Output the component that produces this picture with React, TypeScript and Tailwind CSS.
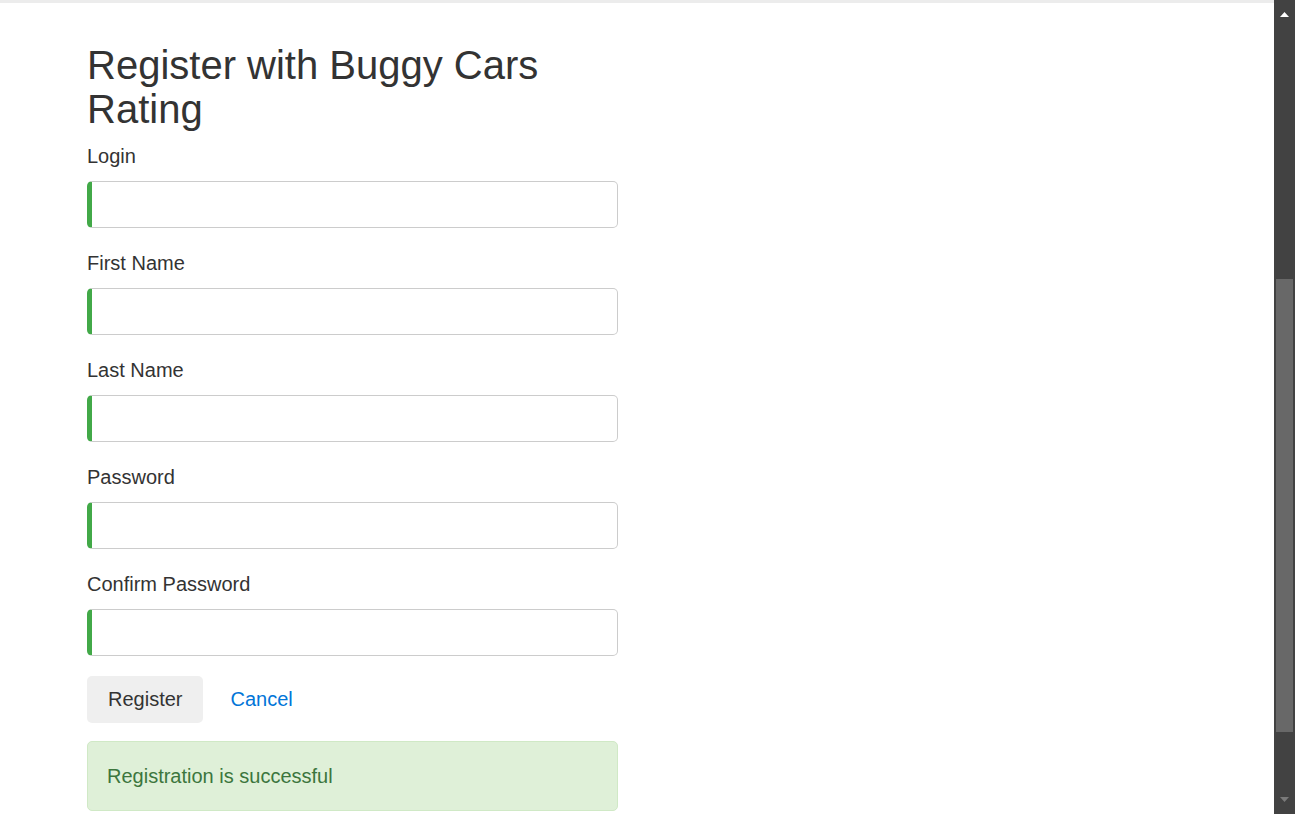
import React from "react";

const fields = ["Login", "First Name", "Last Name", "Password", "Confirm Password"];

export default function App() {
  return (
    <div
      className="flex h-[814px] w-[1295px] overflow-hidden bg-white text-[#292b2c]"
      style={{ fontFamily: '"Liberation Sans", Arial, sans-serif' }}
    >
      <div className="flex min-w-0 flex-1 flex-col">
        <div className="h-[3px] w-full bg-[#ececec]" />
        <div className="w-[618px] pl-[87px]">
          <h1 className="mt-[40px] mb-[10px] text-[40px] font-normal leading-[44px] text-[#333]">
            Register with Buggy Cars Rating
          </h1>
          <form onSubmit={(e) => e.preventDefault()}>
            {fields.map((f) => (
              <div key={f} className="mb-[20px]">
                <label className="mb-[10px] block text-[20px] leading-[30px] text-[#333]">{f}</label>
                <input
                  type={f.includes("Password") ? "password" : "text"}
                  className="block h-[47px] w-full rounded-[5px] border border-l-[5px] border-[#cccccc] border-l-[#42A948] bg-white px-[16px] text-[20px] outline-none"
                />
              </div>
            ))}
            <div className="flex items-center">
              <button
                type="submit"
                className="h-[47px] rounded-[5px] bg-[#efefef] px-[21px] text-[20px] leading-[25px] text-[#333]"
              >
                Register
              </button>
              <a className="ml-[6px] cursor-pointer px-[21px] text-[20px] leading-[25px] text-[#0275d8]">Cancel</a>
            </div>
            <div className="mt-[18px] h-[70px] rounded-[5px] border border-[#d0e9c6] bg-[#dff0d8] px-[19px] py-[20px] text-[20px] leading-[28px] text-[#3c763d]">
              Registration is successful
            </div>
          </form>
        </div>
      </div>
      <div className="flex h-[814px] w-[21px] flex-col bg-[#424242]">
        <div className="flex h-[17px] items-end justify-center">
          <svg width="9" height="5" viewBox="0 0 9 5">
            <polygon points="0,5 4.5,0 9,5" fill="#ffffff" />
          </svg>
        </div>
        <div className="h-[262px]" />
        <div className="mx-[2px] h-[453px] bg-[#686868]" />
        <div className="flex-1" />
        <div className="flex h-[17px] items-start justify-center">
          <svg width="9" height="5" viewBox="0 0 9 5">
            <polygon points="0,0 9,0 4.5,5" fill="#7a7a7a" />
          </svg>
        </div>
      </div>
    </div>
  );
}
